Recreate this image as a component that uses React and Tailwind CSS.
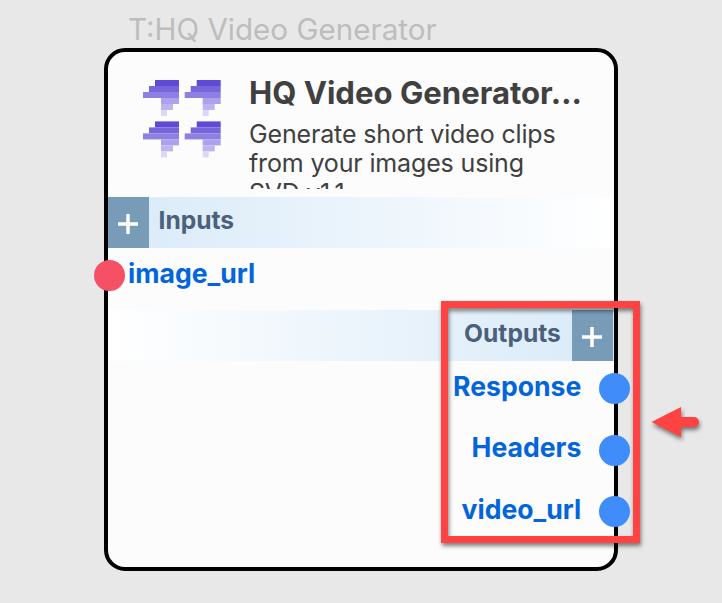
const LOGO_BARS = [
  { x: 12, w: 24, fill: "#5f4ad6" },
  { x: 6, w: 30, fill: "#7765dc" },
  { x: 0, w: 36, fill: "#8e80e2" },
  { x: 18, w: 18, fill: "#aca1ea" },
  { x: 18, w: 12, fill: "#beb5ef" },
  { x: 18, w: 6, fill: "#dcd7f7" },
];

const LOGO_TILES = [
  [0, 0],
  [41.7, 0],
  [0, 41.4],
  [41.7, 41.4],
];

function Logo() {
  return (
    <svg className="mt-[28px] ml-[35.4px] h-[78px] w-[78px] shrink-0" viewBox="0 0 78 78">
      {LOGO_TILES.map(([tx, ty]) => (
        <g key={`${tx}-${ty}`} transform={`translate(${tx} ${ty})`}>
          {LOGO_BARS.map((b, i) => (
            <rect key={i} x={b.x} y={i * 6} width={b.w} height={6} fill={b.fill} />
          ))}
        </g>
      ))}
    </svg>
  );
}

function AddButton() {
  return (
    <button className="flex h-full w-[41px] shrink-0 items-center justify-center bg-[#789bb7]">
      <svg className="mt-[4px] -ml-[1px] h-5 w-5" viewBox="0 0 20 20" stroke="#fff" strokeWidth="3.5">
        <path d="M10 0v20M0 10h20" />
      </svg>
    </button>
  );
}

function Output({ name }) {
  return (
    <div className="flex h-[61.6px] items-start justify-end">
      <span className="mt-[8.9px] mr-[17.5px] text-[26.6px] leading-[33px] font-bold text-[#0265dc]">{name}</span>
      <span className="mt-[12px] -mr-[16px] h-[31px] w-[31px] shrink-0 rounded-full bg-[#3f8cfa]" />
    </div>
  );
}

export default function App() {
  return (
    <main className="relative h-[603px] w-[722px] overflow-hidden bg-[#e8e8e8] font-['Inter',sans-serif]">
      <h1 className="h-[48px] pt-[11px] pl-[128px] text-[29.6px] leading-[36px] font-normal whitespace-nowrap text-[#bdbdbd]">
        T:HQ Video Generator
      </h1>
      <section className="ml-[104px] h-[522.5px] w-[513.8px] rounded-[21px] border-4 border-black bg-[#fcfcfc]">
        <header className="flex h-[144.5px]">
          <Logo />
          <div className="ml-[27.6px] h-[136.5px] w-[340px] overflow-hidden pt-[22px] text-[#404040]">
            <h2 className="text-[31.1px] leading-[38px] font-bold whitespace-nowrap">HQ Video Generator…</h2>
            <p className="mt-[8px] text-[25px] leading-[29.2px] tracking-[-0.15px]">
              Generate short video clips
              <br />
              from your images using
              <span className="mt-[0.6px] block tracking-[-0.3px]">SVD v1.1</span>
            </p>
          </div>
        </header>
        <div className="flex h-[51.5px] bg-linear-to-r from-[#d8eaf8] to-white">
          <AddButton />
          <h3 className="mt-[8.5px] ml-[9.5px] text-[24.6px] leading-[30px] font-bold text-[#4b607a]">Inputs</h3>
        </div>
        <div className="flex h-[61.5px] items-start">
          <span className="mt-[12px] -ml-[14.5px] h-[31px] w-[31px] shrink-0 rounded-full bg-[#f55064]" />
          <span className="mt-[8.5px] ml-[3.5px] text-[26.6px] leading-[33px] font-bold text-[#0265dc]">image_url</span>
        </div>
        <div className="flex h-[51.5px] justify-end bg-linear-to-l from-[#d8eaf8] to-white pr-[0.5px]">
          <h3 className="mt-[8.5px] mr-[11.5px] text-[24.6px] leading-[30px] font-bold text-[#4b607a]">Outputs</h3>
          <AddButton />
        </div>
        <Output name="Response" />
        <Output name="Headers" />
        <Output name="video_url" />
      </section>
      <div className="absolute top-[301px] left-[441px] h-[242px] w-[199px] border-7 border-[#ff4242] drop-shadow-[1px_3px_2px_rgba(0,0,0,0.5)]" />
      <svg
        className="absolute top-[402px] left-[646px] h-[44px] w-[60px] drop-shadow-[1px_3px_2px_rgba(0,0,0,0.5)]"
        viewBox="0 0 60 44"
        fill="#ff4242"
      >
        <path d="M5.5 20L35 5V15H48a5 5 0 0 1 0 10H35V35Z" />
      </svg>
    </main>
  );
}
